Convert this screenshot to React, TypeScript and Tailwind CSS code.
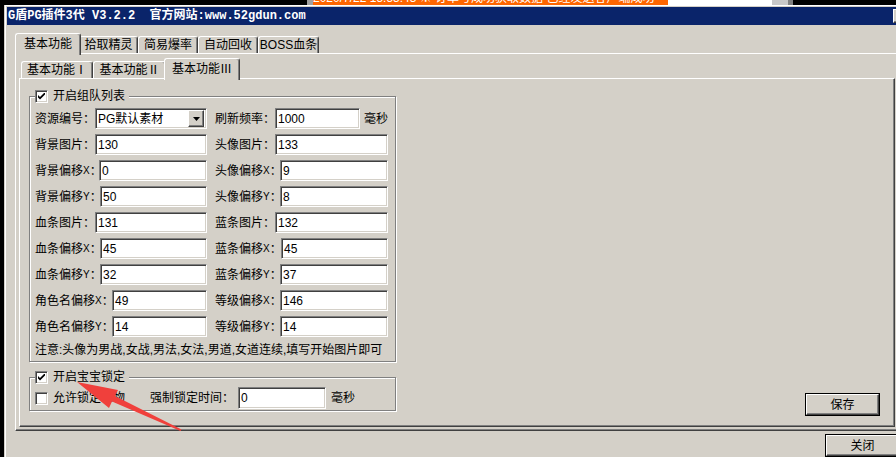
import React from 'react'

// classic win9x look
const sunken =
  'bg-white border border-t-[#808080] border-l-[#808080] border-r-white border-b-white shadow-[inset_1px_1px_0_#404040,inset_-1px_-1px_0_#d4d0c8]'
const raised =
  'bg-[#d4d0c8] border border-t-white border-l-white border-r-[#404040] border-b-[#404040] shadow-[inset_-1px_-1px_0_#808080]'

function Check({ checked }: { checked?: boolean }) {
  return (
    <div className={`w-[13px] h-[13px] shrink-0 flex items-center justify-center ${sunken}`}>
      {checked && (
        <svg width="7" height="7" viewBox="0 0 7 7">
          <path d="M0 2 L2 4 L7 -1 L7 1.5 L2 6.5 L0 4.5 Z" fill="#000" />
        </svg>
      )}
    </div>
  )
}

function Field({ value, w = 'flex-1', h = 'h-[21px]' }: { value: string; w?: string; h?: string }) {
  return (
    <div className={`${w} ${h} ${sunken} flex items-center pl-[2px] text-[12px] leading-none`}>{value}</div>
  )
}

function Label({ text, axis, w }: { text: string; axis?: string; w: string }) {
  return (
    <div className={`${w} shrink-0 text-[12px] whitespace-nowrap flex items-center`}>
      {text}
      {axis && <span className="text-[10px]">{axis}</span>}
      <span>：</span>
    </div>
  )
}

function Tab({ label, w, selected }: { label: string; w: string; selected?: boolean }) {
  if (selected) {
    return (
      <div
        className={`${w} relative z-10 -mx-[2px] -mb-[2px] h-[22px] bg-[#d4d0c8] border-t border-l border-white border-r border-r-[#404040] shadow-[inset_-1px_0_0_#808080] rounded-t-[3px] flex items-center justify-center pb-[2px] text-[12px] whitespace-nowrap`}
      >
        {label}
      </div>
    )
  }
  return (
    <div
      className={`${w} h-[17px] bg-[#d4d0c8] border-t border-l border-white border-r border-r-[#404040] shadow-[inset_-1px_0_0_#808080] rounded-t-[3px] flex items-center justify-center text-[12px] whitespace-nowrap`}
    >
      {label}
    </div>
  )
}

type Cell = { text: string; axis?: string; lw: string; value: string }

const rows: [Cell, Cell][] = [
  [
    { text: '背景图片', lw: 'w-[60px]', value: '130' },
    { text: '头像图片', lw: 'w-[60px]', value: '133' },
  ],
  [
    { text: '背景偏移', axis: 'X', lw: 'w-[64px]', value: '0' },
    { text: '头像偏移', axis: 'X', lw: 'w-[65px]', value: '9' },
  ],
  [
    { text: '背景偏移', axis: 'Y', lw: 'w-[65px]', value: '50' },
    { text: '头像偏移', axis: 'Y', lw: 'w-[65px]', value: '8' },
  ],
  [
    { text: '血条图片', lw: 'w-[60px]', value: '131' },
    { text: '蓝条图片', lw: 'w-[60px]', value: '132' },
  ],
  [
    { text: '血条偏移', axis: 'X', lw: 'w-[65px]', value: '45' },
    { text: '蓝条偏移', axis: 'X', lw: 'w-[66px]', value: '45' },
  ],
  [
    { text: '血条偏移', axis: 'Y', lw: 'w-[65px]', value: '32' },
    { text: '蓝条偏移', axis: 'Y', lw: 'w-[65px]', value: '37' },
  ],
  [
    { text: '角色名偏移', axis: 'X', lw: 'w-[77px]', value: '49' },
    { text: '等级偏移', axis: 'X', lw: 'w-[65px]', value: '146' },
  ],
  [
    { text: '角色名偏移', axis: 'Y', lw: 'w-[77px]', value: '14' },
    { text: '等级偏移', axis: 'Y', lw: 'w-[65px]', value: '14' },
  ],
]

function GroupBox({ title, checked, className, children }: { title: string; checked?: boolean; className: string; children: React.ReactNode }) {
  return (
    <div className={`relative border border-[#808080] shadow-[inset_1px_1px_0_#fff,1px_1px_0_#fff] ${className}`}>
      <div className="absolute -top-[7px] left-[5px] flex items-center gap-[5px] bg-[#d4d0c8] pr-[4px] text-[12px] leading-[13px]">
        <Check checked={checked} />
        <span>{title}</span>
      </div>
      {children}
    </div>
  )
}

export default function App() {
  return (
    <div className="relative w-[896px] h-[457px] overflow-hidden bg-black font-['Liberation_Sans','Noto_Sans_CJK_SC',sans-serif] text-black">
      {/* taskbar strip behind window */}
      <div className="h-[5px] flex">
        <div className="w-[307px]" />
        <div className="w-[6px] bg-[#a0a0a0]" />
        <div className="w-[355px] bg-[#ff6600] overflow-hidden">
          <div className="-mt-[8px] text-[12px] leading-[12px] text-white whitespace-nowrap">
            2020/7/22 15:55:43 ※ 订单号成功获取数据 已经发送客户端成功
          </div>
        </div>
        <div className="w-[104px] bg-white" />
        <div className="w-[16px] bg-[#c8c8c8]" />
        <div className="w-[5px] bg-[#808080]" />
      </div>

      {/* window */}
      <div className="ml-[4px] w-[907px] h-[452px] border-l border-[#d4d0c8]">
        <div className="h-full border-l border-t border-white">
          <div className="h-full pl-[1px] pt-[1px] bg-[#d4d0c8] flex flex-col">
            {/* title bar */}
            <div className="h-[18px] shrink-0 bg-[#0a246a] flex items-center justify-between pl-[1px]">
              <span className="text-white font-bold text-[12px] leading-none whitespace-pre font-['Liberation_Mono','Noto_Sans_CJK_SC',monospace]">
                G盾PG插件3代 V3.2.2  官方网站:www.52gdun.com
              </span>
              <div className={`mr-[2px] w-[16px] h-[14px] flex items-center justify-center ${raised}`}>
                <svg width="8" height="7" viewBox="0 0 8 7">
                  <path d="M0 0 L2 0 L4 2.5 L6 0 L8 0 L5 3.5 L8 7 L6 7 L4 4.5 L2 7 L0 7 L3 3.5 Z" fill="#000" />
                </svg>
              </div>
            </div>

            {/* body */}
            <div className="pt-[8px] pl-[8px]">
              {/* outer tabs */}
              <div className="flex items-end h-[20px] pl-[2px]">
                <Tab label="基本功能" w="w-[66px]" selected />
                <Tab label="拾取精灵" w="w-[59px]" />
                <Tab label="简易爆率" w="w-[60px]" />
                <Tab label="自动回收" w="w-[60px]" />
                <Tab label="BOSS血条" w="w-[61px]" />
              </div>
              <div className="w-[884px] h-[378px] border border-t-white border-l-white border-r-[#404040] border-b-[#404040] shadow-[inset_-1px_-1px_0_#808080] pt-[4px] pl-[3px]">
                {/* inner tabs */}
                <div className="flex items-end h-[20px] pl-[2px]">
                  <Tab label="基本功能Ⅰ" w="w-[72px]" />
                  <Tab label="基本功能Ⅱ" w="w-[73px]" />
                  <Tab label="基本功能Ⅲ" w="w-[76px]" selected />
                </div>
                <div className="w-[876px] h-[349px] border border-t-white border-l-white border-r-[#404040] border-b-[#404040] shadow-[inset_-1px_-1px_0_#808080] flex justify-between pl-[9px] pr-[14px] pt-[17px] pb-[10px]">
                  <div className="w-[367px] flex flex-col">
                    <GroupBox title="开启组队列表" checked className="pt-[11px] pl-[5px] pb-[2px]">
                      <div className="flex flex-col gap-[5px]">
                        <div className="flex items-center h-[21px] gap-[8px]">
                          <div className="w-[172px] flex items-center">
                            <Label text="资源编号" w="w-[60px]" />
                            <div className={`flex-1 h-[21px] ${sunken} flex items-center justify-between pl-[2px] pr-[2px]`}>
                              <span className="text-[12px] leading-none">PG默认素材</span>
                              <div className={`w-[16px] h-[17px] flex items-center justify-center ${raised}`}>
                                <svg width="7" height="4" viewBox="0 0 7 4">
                                  <path d="M0 0 L7 0 L3.5 4 Z" fill="#000" />
                                </svg>
                              </div>
                            </div>
                          </div>
                          <div className="flex items-center">
                            <Label text="刷新频率" w="w-[60px]" />
                            <Field value="1000" w="w-[85px]" />
                            <span className="ml-[4px] text-[12px]">毫秒</span>
                          </div>
                        </div>
                        {rows.map((r, i) => (
                          <div key={i} className="flex items-center h-[21px] gap-[8px]">
                            <div className="w-[172px] flex items-center">
                              <Label text={r[0].text} axis={r[0].axis} w={r[0].lw} />
                              <Field value={r[0].value} />
                            </div>
                            <div className="w-[173px] flex items-center">
                              <Label text={r[1].text} axis={r[1].axis} w={r[1].lw} />
                              <Field value={r[1].value} />
                            </div>
                          </div>
                        ))}
                      </div>
                      <div className="mt-[5px] h-[17px] leading-[17px] text-[12px] whitespace-nowrap">
                        注意:头像为男战,女战,男法,女法,男道,女道连续,填写开始图片即可
                      </div>
                    </GroupBox>

                    <GroupBox title="开启宝宝锁定" checked className="mt-[15px] pt-[9px] pl-[5px] pb-[1px]">
                      <div className="flex items-center h-[22px] text-[12px]">
                        <Check />
                        <span className="ml-[5px] w-[97px]">允许锁定人物</span>
                        <span className="w-[88px] whitespace-nowrap">强制锁定时间：</span>
                        <Field value="0" w="w-[88px]" h="h-[22px]" />
                        <span className="ml-[5px]">毫秒</span>
                      </div>
                    </GroupBox>
                  </div>

                  <div className="self-end w-[75px] h-[23px] border border-black">
                    <div className={`w-full h-full flex items-center justify-center text-[12px] ${raised}`}>保存</div>
                  </div>
                </div>
              </div>
            </div>

            {/* bottom buttons */}
            <div className="flex justify-end pr-[11px] mt-[3px]">
              <div className="w-[75px] h-[23px] border border-black">
                <div className={`w-full h-full flex items-center justify-center text-[12px] ${raised}`}>关闭</div>
              </div>
            </div>
          </div>
        </div>
      </div>

      {/* red annotation arrow */}
      <svg className="absolute left-0 top-0 pointer-events-none" width="896" height="457" viewBox="0 0 896 457">
        <polygon
          points="77,382 118,390 115,396 181.5,429.5 180.5,431 112,401.5 109,408"
          fill="#f0403c"
        />
      </svg>
    </div>
  )
}
